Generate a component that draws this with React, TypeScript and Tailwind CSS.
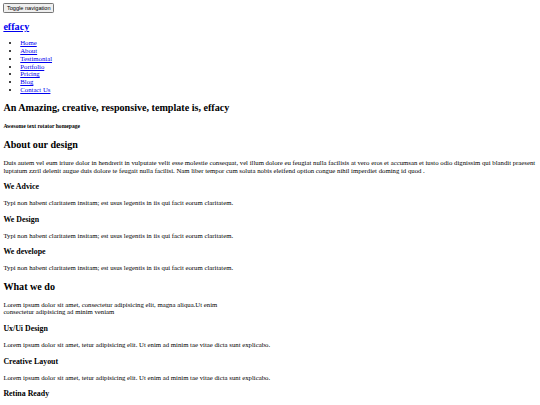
import { Fragment } from "react"

const navLinks = ["Home", "About", "Testimonial", "Portfolio", "Pricing", "Blog", "Contact Us"]

const aboutItems = ["We Advice", "We Design", "We develope"]

const serviceItems = [
  { title: "Ux/Ui Design", text: "Lorem ipsum dolor sit amet, tetur adipisicing elit. Ut enim ad minim tae vitae dicta sunt explicabo." },
  { title: "Creative Layout", text: "Lorem ipsum dolor sit amet, tetur adipisicing elit. Ut enim ad minim tae vitae dicta sunt explicabo." },
  { title: "Retina Ready", text: "Lorem ipsum dolor sit amet, tetur adipisicing elit. Ut enim ad minim tae vitae dicta sunt explicabo." },
]

// the page is laid out at 1280px, as a plain unstyled document, and zoomed to the 540px window
export default function App() {
  return (
    <div className="w-[1280px] [zoom:0.421875] bg-white text-black font-['Liberation_Serif',serif] text-[16px] leading-[1.15] p-2">
      <nav>
        <button
          type="button"
          className="bg-[#efefef] border border-[#767676] rounded-[3px] px-[6px] py-[1px] text-[13.333px] font-['Liberation_Sans',Arial,sans-serif] leading-[1.15]"
        >
          Toggle navigation
        </button>

        <h2 className="text-[24px] font-bold mt-[19.92px] mb-[15px]">
          <a href="#" className="text-[#0000ee] underline">effacy</a>
        </h2>

        <ul className="list-disc pl-10 my-4">
          {navLinks.map(link => (
            <li key={link}>
              <a href="#" className="text-[#0000ee] underline">{link}</a>
            </li>
          ))}
        </ul>
      </nav>

      <h1 className="text-[24px] font-bold my-[19.92px]">An Amazing, creative, responsive, template is, effacy</h1>
      <h5 className="text-[13.28px] font-bold my-[22.18px]">Awesome text rotator homepage</h5>

      <h2 className="text-[24px] font-bold my-[19.92px]">About our design</h2>
      <p className="my-4">
        Duis autem vel eum iriure dolor in hendrerit in vulputate velit esse molestie consequat, vel illum dolore eu feugiat nulla facilisis at vero eros et accumsan et iusto odio dignissim qui blandit praesent luptatum zzril delenit augue duis dolore te feugait nulla facilisi. Nam liber tempor cum soluta nobis eleifend option congue nihil imperdiet doming id quod .
      </p>
      {aboutItems.map(item => (
        <Fragment key={item}>
          <h3 className="text-[18.72px] font-bold my-[18.72px]">{item}</h3>
          <p className="my-4">Typi non habent claritatem insitam; est usus legentis in iis qui facit eorum claritatem.</p>
        </Fragment>
      ))}

      <h2 className="text-[24px] font-bold my-[19.92px]">What we do</h2>
      <p className="my-4">
        Lorem ipsum dolor sit amet, consectetur adipisicing elit, magna aliqua.Ut enim
        <br />
        consectetur adipisicing ad minim veniam
      </p>
      {serviceItems.map(item => (
        <Fragment key={item.title}>
          <h3 className="text-[18.72px] font-bold my-[18.72px]">{item.title}</h3>
          <p className="my-4">{item.text}</p>
        </Fragment>
      ))}
    </div>
  )
}
